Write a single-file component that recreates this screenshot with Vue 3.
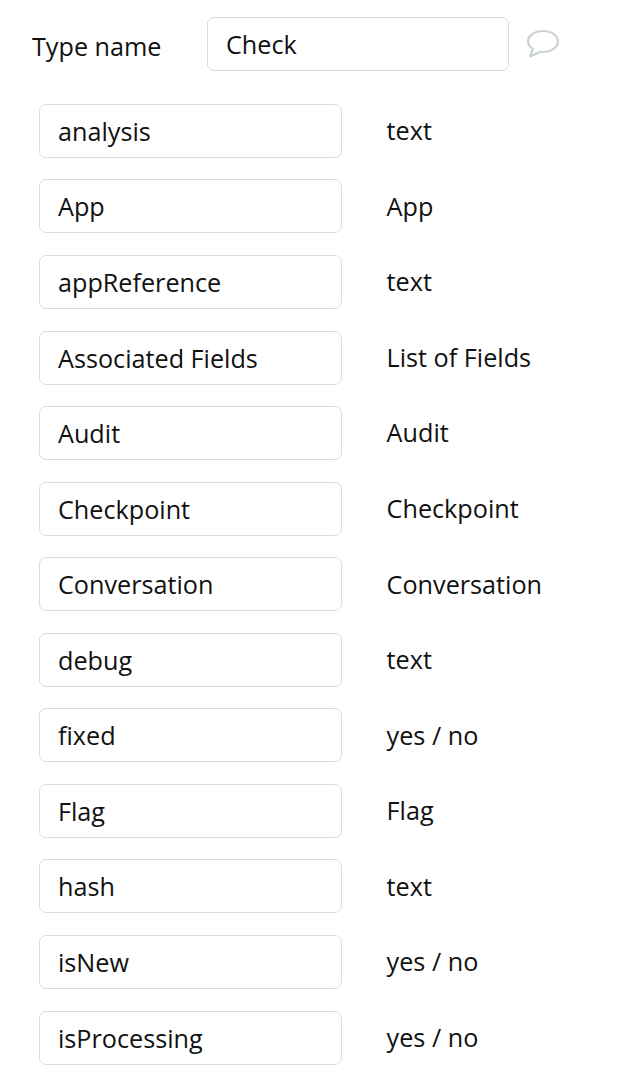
<script setup>
const fields = [
  { name: 'analysis', type: 'text' },
  { name: 'App', type: 'App' },
  { name: 'appReference', type: 'text' },
  { name: 'Associated Fields', type: 'List of Fields' },
  { name: 'Audit', type: 'Audit' },
  { name: 'Checkpoint', type: 'Checkpoint' },
  { name: 'Conversation', type: 'Conversation' },
  { name: 'debug', type: 'text' },
  { name: 'fixed', type: 'yes / no' },
  { name: 'Flag', type: 'Flag' },
  { name: 'hash', type: 'text' },
  { name: 'isNew', type: 'yes / no' },
  { name: 'isProcessing', type: 'yes / no' }
]
</script>

<template>
  <div class="editor">
    <div class="type-header">
      <span class="type-label">Type name</span>
      <div class="box type-box">Check</div>
      <svg class="comment-icon" viewBox="0 0 34 30" width="34" height="30">
        <path d="M17 2C8.700 2 2 6.700 2 12.500c0 3 2 5.600 5 7.400L4 27.500 14.500 22.800c.8.100 1.700.200 2.500.200 8.300 0 15-4.700 15-10.500S25.300 2 17 2z" fill="none" stroke="#c8d3d5" stroke-width="2.200" stroke-linejoin="round" />
      </svg>
    </div>
    <div class="field-list">
      <div v-for="field in fields" :key="field.name" class="field-row">
        <div class="box field-box">{{ field.name }}</div>
        <span class="field-type">{{ field.type }}</span>
      </div>
    </div>
  </div>
</template>

<style scoped>
.editor {
  width: 626px;
  height: 1078px;
  overflow: hidden;
  background: #fff;
  color: #111;
  font-family: "Open Sans", sans-serif;
  font-size: 25.2px;
}

.type-header {
  display: flex;
  align-items: flex-start;
  height: 60px;
  padding: 17px 0 0 32px;
}

.type-label {
  width: 175px;
  line-height: 58px;
}

.box {
  box-sizing: border-box;
  height: 54px;
  padding-left: 18px;
  line-height: 52px;
  background: #fff;
  border: 1px solid #dcdcdc;
  border-radius: 7px;
}

.type-box {
  width: 302px;
}

.comment-icon {
  margin: 12px 0 0 17px;
}

.field-list {
  display: flex;
  flex-direction: column;
  gap: 21.5625px;
  padding: 26.84px 0 0 39px;
}

.field-row {
  display: flex;
  align-items: center;
}

.field-box {
  width: 303px;
}

.field-type {
  margin: 0 0 1.2px 44.6px;
}
</style>
